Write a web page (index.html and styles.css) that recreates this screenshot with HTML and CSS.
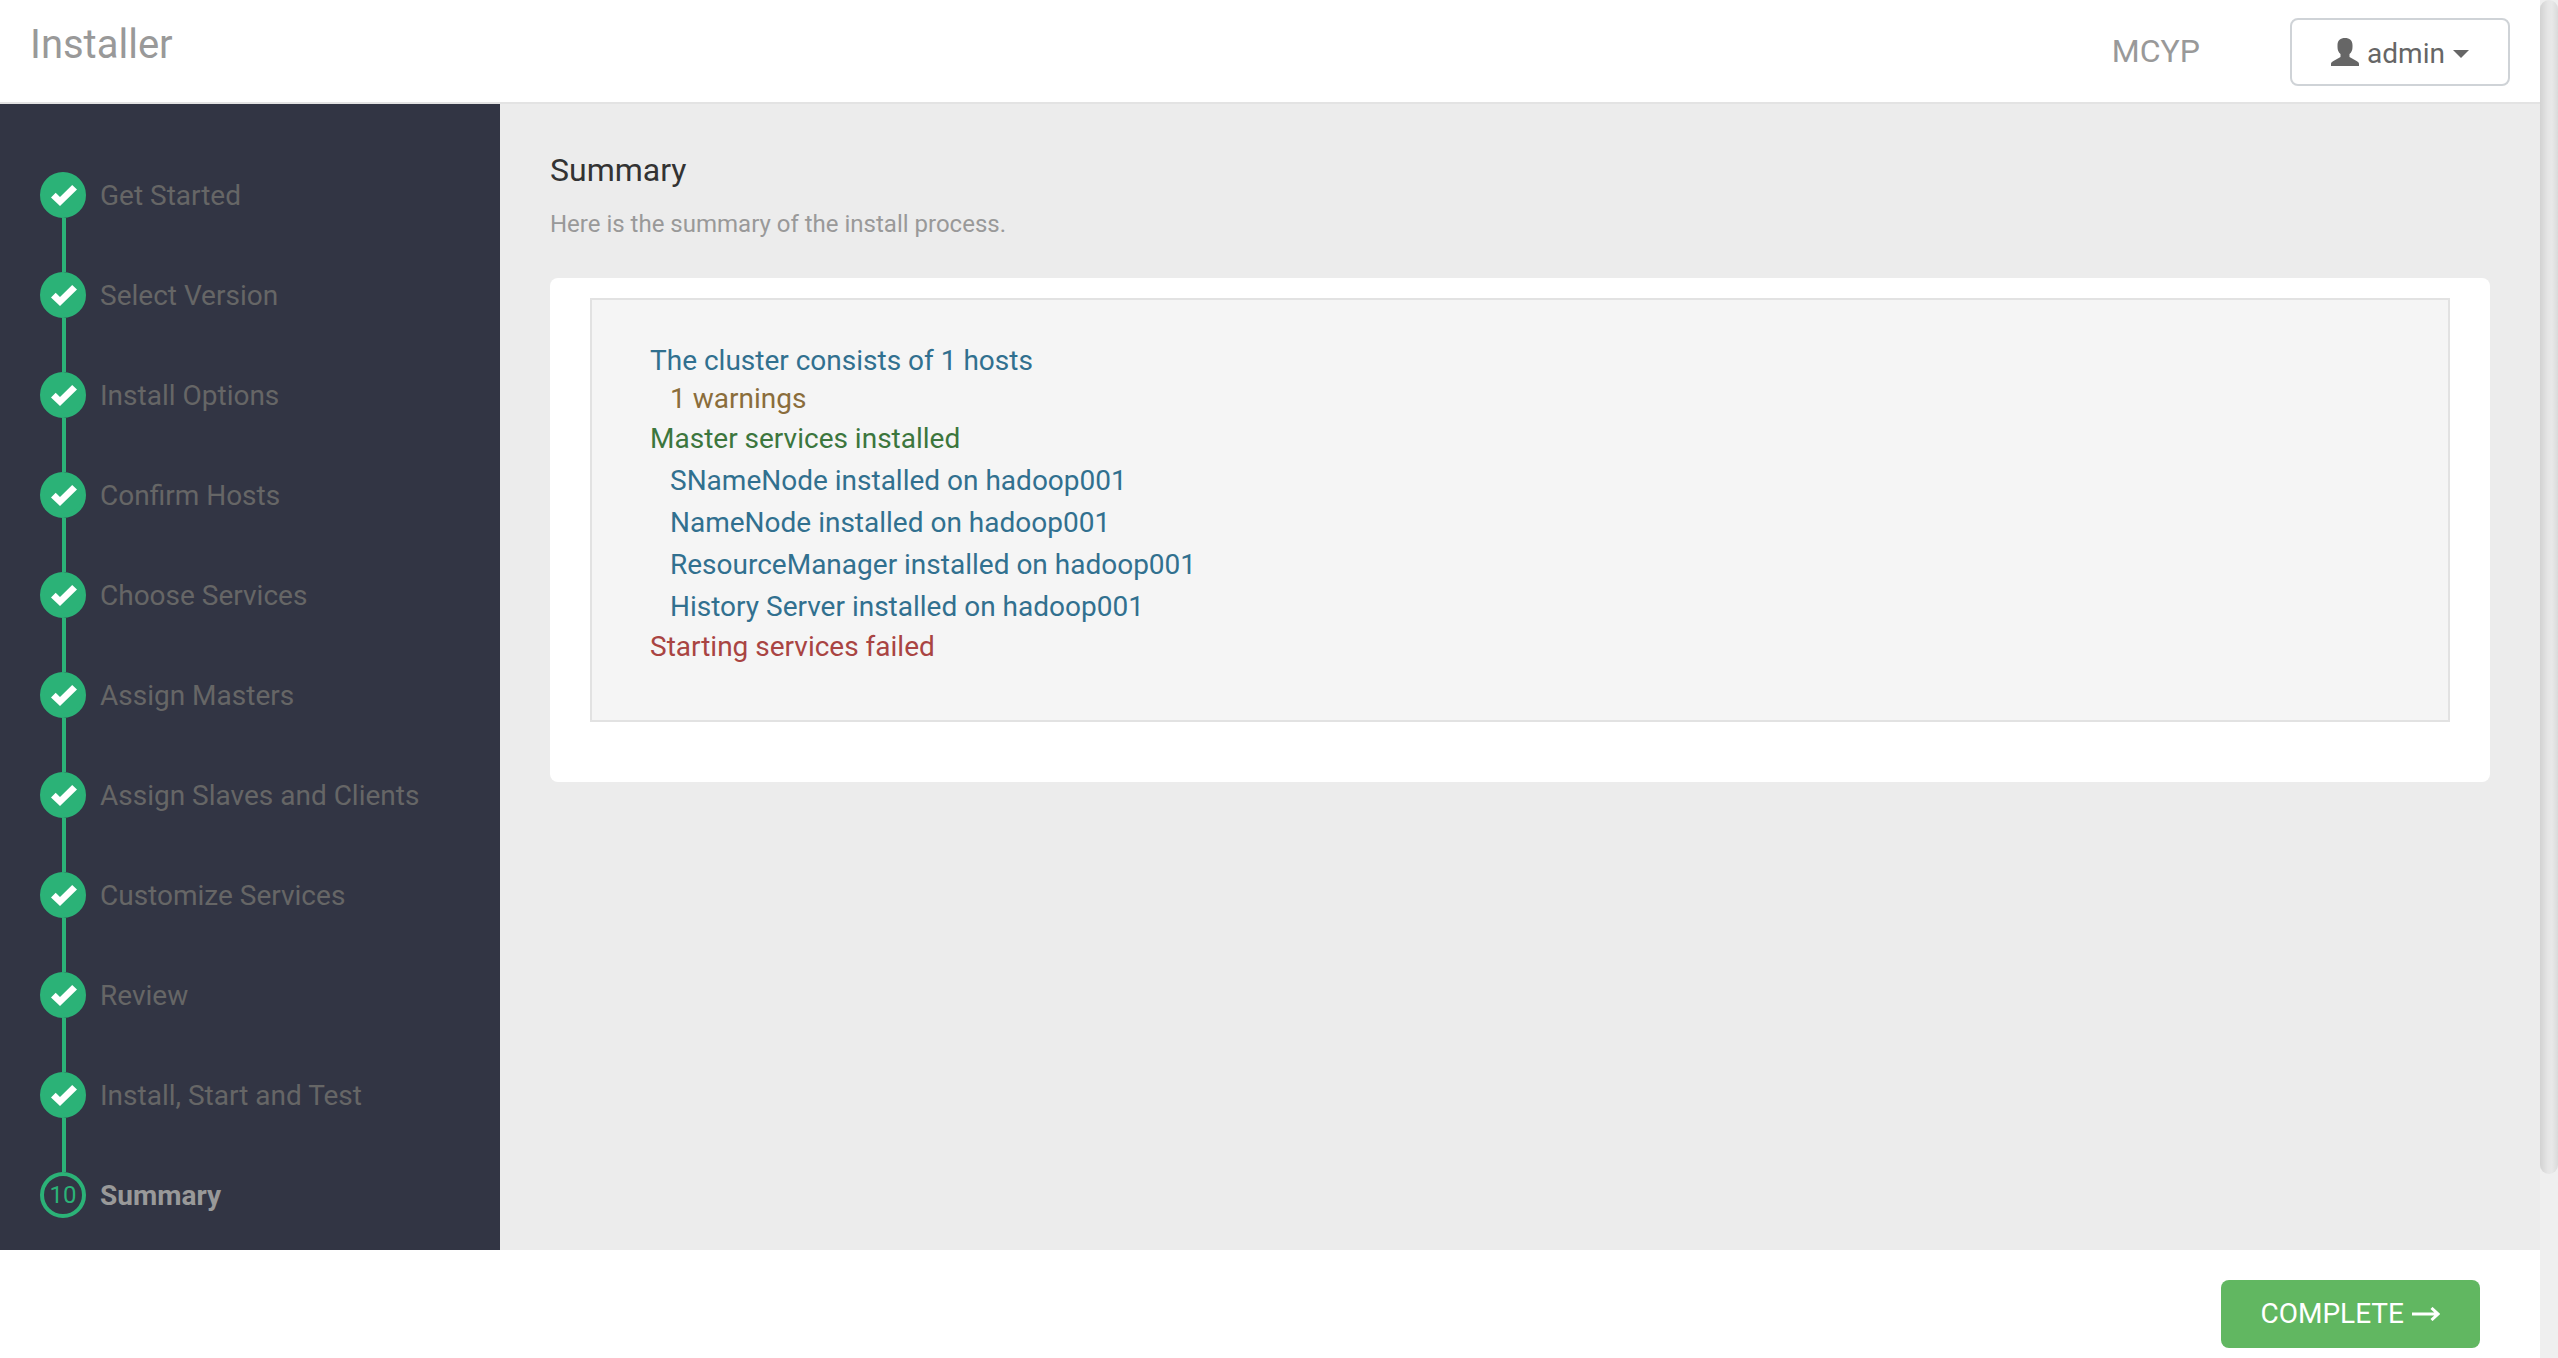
FILE: index.html
```html
<!DOCTYPE html>
<html lang="en">
<head>
    <meta charset="UTF-8">
    <meta name="viewport" content="width=device-width, initial-scale=1.0">
    <title>Installer</title>
    <link rel="stylesheet" href="styles.css">
</head>
<body>
    <svg class="sprite" aria-hidden="true">
        <symbol id="check" viewBox="0 0 26 21">
            <path d="M0 12.5 L4.7 7.8 L9 12 L21.2 0 L26 4.6 L9 21 Z"/>
        </symbol>
    </svg>

    <div class="page">
        <header class="topbar">
            <h1 class="brand">Installer</h1>
            <div class="topbar-right">
                <span class="cluster-name">MCYP</span>
                <button class="btn btn-user" type="button">
                    <svg class="icon-user" viewBox="0 0 28 28" aria-hidden="true">
                        <path d="M14 0 C18.500 0 21.500 2.500 21.500 7 V9 C21.500 12 20.500 14.500 18.500 16 V19 L26 23.300 C27.500 24.200 28 25 28 26.300 V28 H0 V26.300 C0 25 .5 24.200 2 23.300 L9.500 19 V16 C7.500 14.500 6.500 12 6.500 9 V7 C6.500 2.500 9.500 0 14 0 Z"/>
                    </svg>
                    <span>admin</span>
                    <span class="caret"></span>
                </button>
            </div>
        </header>

        <div class="content">
            <nav class="sidebar">
                <ol class="steps">
                    <li class="step done"><span class="step-mark"><svg><use href="#check"/></svg></span><a href="#">Get Started</a></li>
                    <li class="step done"><span class="step-mark"><svg><use href="#check"/></svg></span><a href="#">Select Version</a></li>
                    <li class="step done"><span class="step-mark"><svg><use href="#check"/></svg></span><a href="#">Install Options</a></li>
                    <li class="step done"><span class="step-mark"><svg><use href="#check"/></svg></span><a href="#">Confirm Hosts</a></li>
                    <li class="step done"><span class="step-mark"><svg><use href="#check"/></svg></span><a href="#">Choose Services</a></li>
                    <li class="step done"><span class="step-mark"><svg><use href="#check"/></svg></span><a href="#">Assign Masters</a></li>
                    <li class="step done"><span class="step-mark"><svg><use href="#check"/></svg></span><a href="#">Assign Slaves and Clients</a></li>
                    <li class="step done"><span class="step-mark"><svg><use href="#check"/></svg></span><a href="#">Customize Services</a></li>
                    <li class="step done"><span class="step-mark"><svg><use href="#check"/></svg></span><a href="#">Review</a></li>
                    <li class="step done"><span class="step-mark"><svg><use href="#check"/></svg></span><a href="#">Install, Start and Test</a></li>
                    <li class="step active"><span class="step-mark">10</span><a href="#">Summary</a></li>
                </ol>
            </nav>

            <main class="main">
                <h2>Summary</h2>
                <p class="description">Here is the summary of the install process.</p>
                <div class="panel">
                    <div class="well">
                        <p class="info">The cluster consists of 1 hosts</p>
                        <p class="warning sub">1 warnings</p>
                        <p class="success">Master services installed</p>
                        <ul class="services info sub">
                            <li>SNameNode installed on hadoop001</li>
                            <li>NameNode installed on hadoop001</li>
                            <li>ResourceManager installed on hadoop001</li>
                            <li>History Server installed on hadoop001</li>
                        </ul>
                        <p class="danger">Starting services failed</p>
                    </div>
                </div>
            </main>
        </div>

        <footer class="footer">
            <button class="btn btn-success" type="button">
                <span>COMPLETE</span>
                <svg class="icon-arrow" viewBox="0 0 28 14" aria-hidden="true">
                    <path d="M0 7 H26 M19.500 1 L26 7 L19.500 13"/>
                </svg>
            </button>
        </footer>
    </div>

    <div class="scrollbar"><div class="thumb"></div></div>
</body>
</html>
```
FILE: styles.css
```css
* {
    box-sizing: border-box;
}
body {
    display: flex;
    height: 100vh;
    margin: 0;
    font-family: Roboto, "Liberation Sans", sans-serif;
    font-size: 28px;
    line-height: 40px;
    color: #333;
    background: #fff;
    overflow: hidden;
}
h1, h2, p, ol, ul {
    margin: 0;
    padding: 0;
    font-weight: 400;
    list-style: none;
}
.sprite {
    position: absolute;
    width: 0;
    height: 0;
}
.page {
    flex: 1;
    display: flex;
    flex-direction: column;
}

/* top bar */
.topbar {
    display: flex;
    justify-content: space-between;
    align-items: flex-start;
    height: 104px;
    padding: 18px 30px;
    border-bottom: 2px solid #e3e3e3;
}
.brand {
    font-size: 40px;
    line-height: 54px;
    color: #999;
}
.topbar-right {
    display: flex;
    align-items: flex-start;
    gap: 90px;
}
.cluster-name {
    font-size: 32px;
    line-height: 66px;
    color: #999;
}
.btn {
    display: flex;
    align-items: center;
    justify-content: center;
    gap: 8px;
    min-width: 220px;
    height: 68px;
    padding: 0 38px;
    border: 2px solid transparent;
    border-radius: 8px;
    font: inherit;
    cursor: pointer;
}
.btn-user {
    padding-top: 4px;
    color: #666;
    background: #fff;
    border-color: #cfd3d7;
}
.icon-user {
    width: 28px;
    height: 28px;
    margin-bottom: 4px;
    fill: #666;
}
.caret {
    border-top: 8px solid #666;
    border-left: 8px solid transparent;
    border-right: 8px solid transparent;
}

/* wizard steps */
.content {
    flex: 1;
    display: flex;
    background: #ececec;
}
.sidebar {
    width: 500px;
    padding: 68px 40px 0;
    background: #323544;
}
.step {
    display: flex;
    flex-wrap: wrap;
    align-items: center;
    column-gap: 14px;
}
.step::after {
    content: "";
    width: 4px;
    height: 54px;
    margin-left: 22px;
    background: #2bb277;
}
.step:last-child::after {
    display: none;
}
.step a {
    width: 350px;
    padding-top: 2px;
    color: #666;
    text-decoration: none;
}
.step.active a {
    color: #999;
    font-weight: 700;
}
.step-mark {
    display: flex;
    align-items: center;
    justify-content: center;
    width: 46px;
    height: 46px;
    border: 4px solid #2bb277;
    border-radius: 50%;
    font-size: 24px;
    color: #2bb277;
}
.step-mark svg {
    width: 26px;
    height: 21px;
    margin-left: 2px;
    fill: #fff;
}
.done .step-mark {
    background: #2bb277;
}

/* summary */
.main {
    flex: 1;
    padding: 44px 50px;
}
h2 {
    font-size: 32px;
    line-height: 44px;
    color: #333;
}
.description {
    margin: 14px 0 36px;
    font-size: 24px;
    line-height: 36px;
    color: #999;
}
.panel {
    padding: 20px 40px 60px;
    background: #fff;
    border-radius: 8px;
}
.well {
    padding: 42px 58px 54px;
    background: #f5f5f5;
    border: 2px solid #e2e2e2;
}
.well p {
    line-height: 38px;
}
.well .success,
.services li {
    line-height: 42px;
}
.sub {
    padding-left: 20px;
}
.info {
    color: #31708f;
}
.well .warning {
    color: #8a6d3b;
}
.success {
    color: #3c763d;
}
.danger {
    color: #a94442;
}

/* footer */
.footer {
    display: flex;
    justify-content: flex-end;
    height: 108px;
    padding: 30px 60px 10px;
}
.btn-success {
    color: #fff;
    background: #61b761;
}
.icon-arrow {
    width: 28px;
    height: 14px;
    fill: none;
    stroke: #fff;
    stroke-width: 3;
}

.scrollbar {
    width: 18px;
    background: #efefef;
}
.thumb {
    height: calc(100% - 184px);
    border-radius: 10px;
    background: linear-gradient(to right, #d2d2d2, #e6e6e6 8px, #e8e8e8 12px, #dadada);
}
```
